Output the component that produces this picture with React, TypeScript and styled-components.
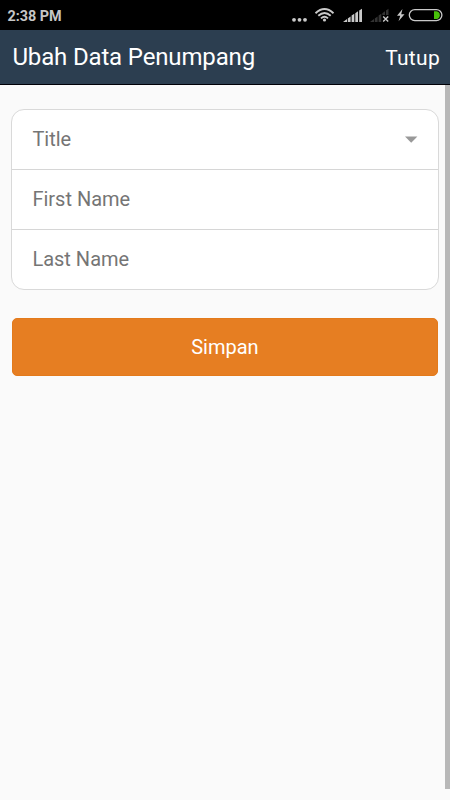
import React from "react";
import styled, { createGlobalStyle } from "styled-components";

const GlobalStyle = createGlobalStyle`
  * { box-sizing: border-box; }
  body { margin: 0; background: #fafafa; font-family: Roboto, "Liberation Sans", sans-serif; }
`;

const Screen = styled.div`
  width: 450px;
  height: 800px;
  display: flex;
  flex-direction: column;
  background: #fafafa;
  overflow: hidden;
`;

const StatusBar = styled.div`
  height: 30px;
  flex: none;
  display: flex;
  justify-content: space-between;
  background: #000;
`;

const Clock = styled.span`
  padding-left: 7.5px;
  font-size: 14.4px;
  font-weight: 700;
  line-height: 33px;
  letter-spacing: -0.05px;
  color: #c6c6c6;
  white-space: nowrap;
`;

const Header = styled.header`
  height: 55px;
  flex: none;
  display: flex;
  justify-content: space-between;
  padding: 0 10px 0 12.4px;
  background: #2c3e50;
  border-bottom: 1px solid #000007;
  color: #fff;
  white-space: nowrap;
`;

const Heading = styled.h1`
  margin: 0;
  font-size: 24px;
  font-weight: 400;
  line-height: 54px;
  letter-spacing: -0.15px;
`;

const CloseButton = styled.button`
  border: 0;
  padding: 0;
  background: none;
  color: inherit;
  font: 400 21px/54px Roboto, sans-serif;
  letter-spacing: 0.3px;
  padding-top: 1px;
`;

const Body = styled.div`
  flex: 1;
  display: flex;
`;

const Form = styled.main`
  flex: 1;
  display: flex;
  flex-direction: column;
  gap: 28px;
  padding: 24px 6.5px 0 11.4px;
`;

const Fields = styled.div`
  height: 181px;
  border: 1px solid #d9d9d9;
  border-radius: 13px;
  background: #fff;
`;

const Field = styled.div`
  height: 60px;
  display: flex;
  align-items: center;
  justify-content: space-between;
  padding: 0 19.4px 1px 20px;
  font-size: 20px;
  color: #757575;
  &:not(:last-child) { border-bottom: 1px solid #d6d6d6; }
  &:last-child { padding-bottom: 2px; }
`;

const SaveButton = styled.button`
  height: 58px;
  margin: 0 1px;
  padding: 0;
  border: 1px solid #e37a1b;
  border-radius: 5px;
  background: #e67e22;
  color: #fff;
  font: 400 20px/56px Roboto, sans-serif;
`;

const ScrollThumb = styled.div`
  width: 5px;
  height: 704px;
  background: #b8b8b8;
`;

const StatusIcons = () => (
  <svg width="164" height="30" viewBox="286 0 164 30" fill="#c9c9c9">
    <circle cx="294" cy="19.8" r="1.9" />
    <circle cx="299.5" cy="19.8" r="1.9" />
    <circle cx="305" cy="19.8" r="1.9" />
    <g fill="none" stroke="#c9c9c9" strokeWidth="1.9">
      <path d="M315.5 13.2Q324.5 5 333.5 13.2" />
      <path d="M318.3 15.8Q324.5 10.2 330.7 15.8" />
      <path d="M321 18.4Q324.5 15 328 18.4" />
    </g>
    <circle cx="324.5" cy="20" r="1.6" />
    <path d="M343 22L347 19V22ZM347.8 18.5L350.6 16.4V22H347.8ZM351.6 15.6L354.3 13.8V22H351.6ZM355.3 13.2L358 11.2V22H355.3ZM359.2 10.5L362 8.8V22H359.2Z" />
    <path fill="#333" d="M370 22L374 19V22ZM374.8 18.5L377.6 16.4V22H374.8ZM378.6 15.6L381.3 13.8V22H378.6ZM382.3 13.2L385 11.2V15H382.3ZM386 10.5L388.5 8.8V15H386Z" />
    <path stroke="#c9c9c9" strokeWidth="1.4" d="M383.2 16.5L388.2 21.5M388.2 16.5L383.2 21.5" />
    <path d="M402.5 9L397 15.8H400.3L398.5 21.3L404.5 14.2H401.2Z" />
    <rect x="409.3" y="9.6" width="32.6" height="11" rx="5.5" fill="none" stroke="#c9c9c9" strokeWidth="1.3" />
    <path fill="#48c00a" d="M434 11.3H436.5A3.9 3.9 0 0 1 436.5 19H434Z" />
  </svg>
);

const Caret = () => (
  <svg width="13" height="7" viewBox="0 0 13 7"><path d="M0 0.5H12.4L6.2 6.7Z" fill="#999" /></svg>
);

export default function App() {
  return (
    <>
      <GlobalStyle />
      <Screen>
        <StatusBar>
          <Clock>2:38 PM</Clock>
          <StatusIcons />
        </StatusBar>
        <Header>
          <Heading>Ubah Data Penumpang</Heading>
          <CloseButton>Tutup</CloseButton>
        </Header>
        <Body>
          <Form>
            <Fields>
              <Field>Title<Caret /></Field>
              <Field>First Name</Field>
              <Field>Last Name</Field>
            </Fields>
            <SaveButton>Simpan</SaveButton>
          </Form>
          <ScrollThumb />
        </Body>
      </Screen>
    </>
  );
}
